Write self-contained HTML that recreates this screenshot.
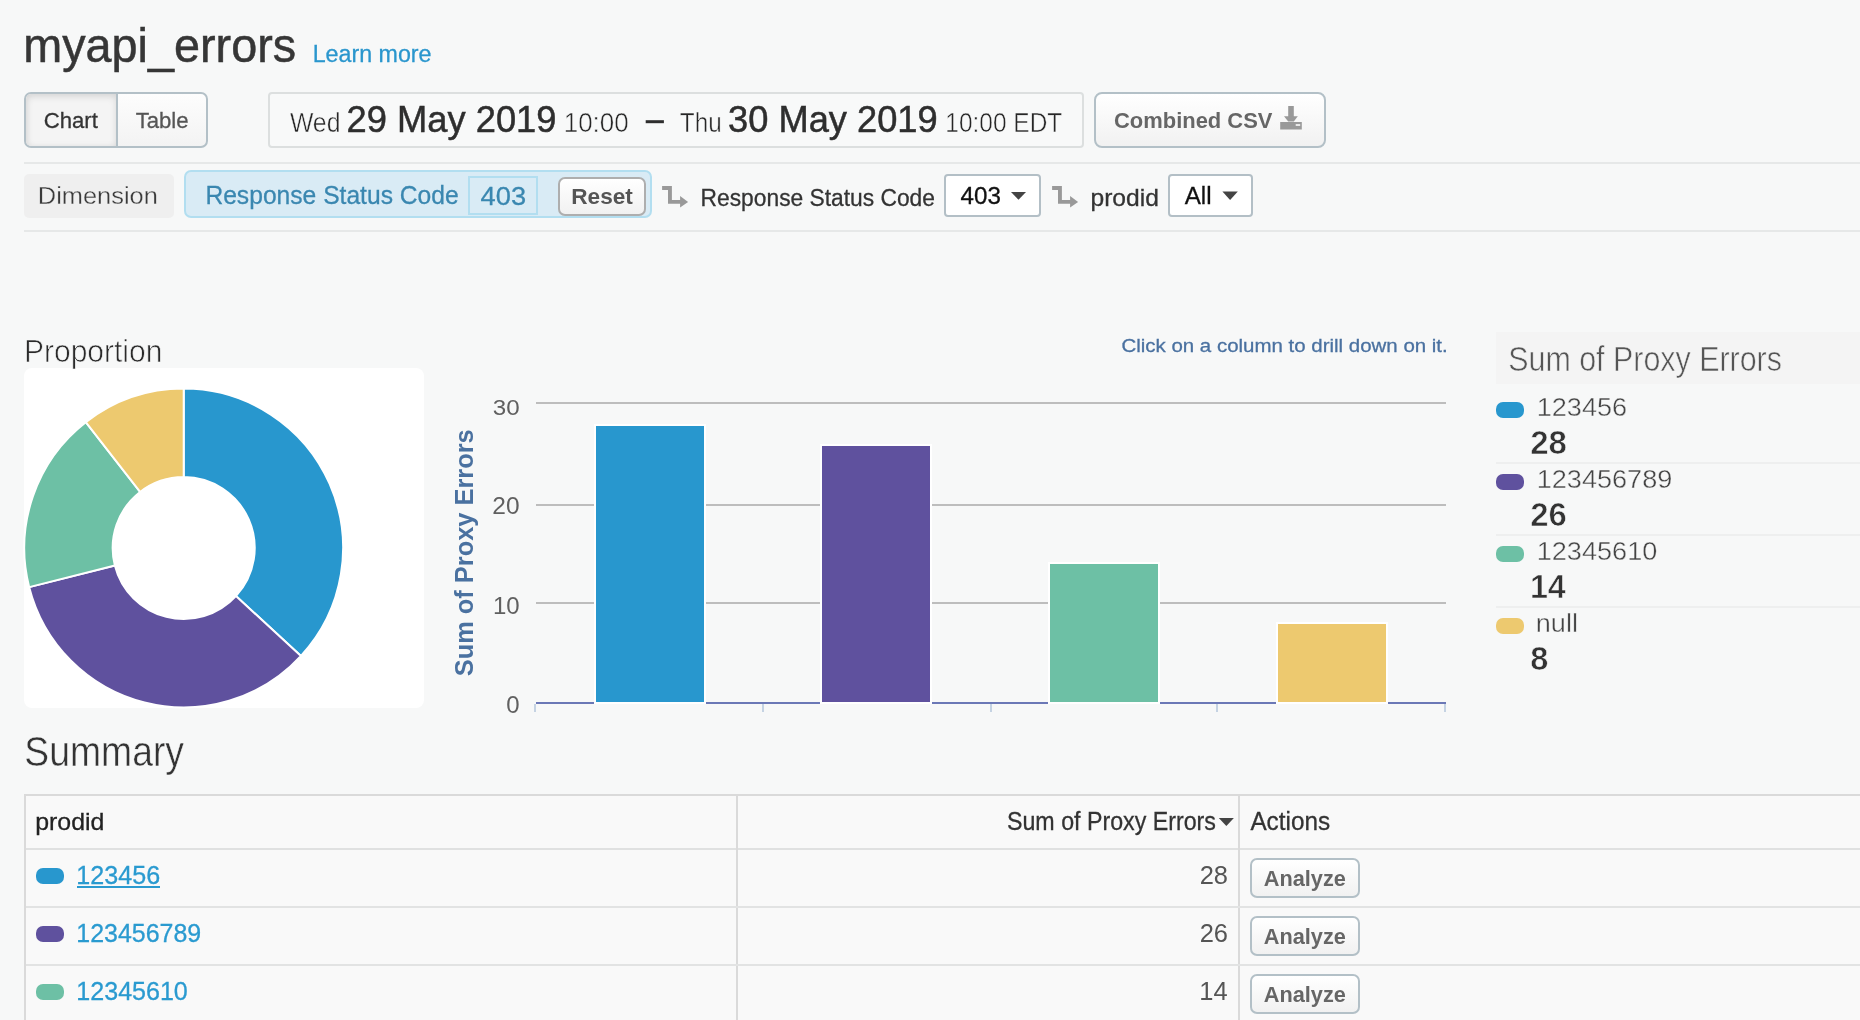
<!DOCTYPE html>
<html><head><meta charset="utf-8"><title>myapi_errors</title>
<style>
html,body{margin:0;padding:0;}
body{width:1860px;height:1020px;overflow:hidden;background:#f7f8f8;position:relative;font-family:"Liberation Sans",sans-serif;}
.a{position:absolute;box-sizing:border-box;}
.hl{position:absolute;height:2px;}
.sw{position:absolute;width:28px;height:16px;border-radius:7px;}
.btn{position:absolute;box-sizing:border-box;border:2px solid #b3c0c7;border-radius:7px;background:linear-gradient(#ffffff,#f1f1f1);}
.an{width:110px;height:40px;}
svg{position:absolute;left:0;top:0;will-change:transform;}
svg text{font-family:"Liberation Sans",sans-serif;}
</style></head><body>
<!-- view toggle -->
<div class="a" style="left:24px;top:92px;width:184px;height:56px;border:2px solid #b3c0c7;border-radius:7px;background:linear-gradient(#fdfdfd,#f3f3f3);overflow:hidden">
  <div class="a" style="left:0;top:0;width:92px;height:52px;background:#f4f4f4;box-shadow:inset 0 3px 7px rgba(0,0,0,.10), inset 2px 0 6px rgba(0,0,0,.05);border-right:2px solid #b3c0c7"></div>
</div>
<!-- date range -->
<div class="a" style="left:268px;top:92px;width:816px;height:56px;border:2px solid #dcdfdf;border-radius:4px;background:#f8f9f9"></div>
<!-- csv -->
<div class="btn" style="left:1094px;top:92px;width:232px;height:56px;border-radius:8px"></div>
<!-- rules -->
<div class="hl" style="left:24px;top:162px;width:1836px;background:#e6e8e8"></div>
<div class="hl" style="left:24px;top:230px;width:1836px;background:#e6e8e8"></div>
<!-- dimension -->
<div class="a" style="left:24px;top:174px;width:150px;height:44px;border-radius:5px;background:#efefef"></div>
<div class="a" style="left:184px;top:170px;width:468px;height:48px;border:2px solid #b2def0;border-radius:7px;background:#d9ebf5"></div>
<div class="a" style="left:468px;top:176px;width:70px;height:39px;border:2px solid #b2def0;background:#d9ebf5"></div>
<div class="btn" style="left:558px;top:177px;width:88px;height:39px;border-color:#aeaeae;border-radius:7px"></div>
<div class="a" style="left:944px;top:174px;width:97px;height:43px;border:2px solid #b3bfc6;border-radius:4px;background:#fff"></div>
<div class="a" style="left:1168px;top:174px;width:85px;height:43px;border:2px solid #b3bfc6;border-radius:4px;background:#fff"></div>
<!-- pie box -->
<div class="a" style="left:24px;top:368px;width:400px;height:340px;border-radius:8px;background:#fff"></div>
<!-- legend -->
<div class="a" style="left:1496px;top:332px;width:364px;height:52px;background:#f4f4f4"></div>
<div class="sw" style="left:1496px;top:402px;background:#2897ce"></div>
<div class="hl" style="left:1496px;top:462px;width:364px;background:#eeefef"></div>
<div class="sw" style="left:1496px;top:474px;background:#5f519e"></div>
<div class="hl" style="left:1496px;top:534px;width:364px;background:#eeefef"></div>
<div class="sw" style="left:1496px;top:546px;background:#6dc0a5"></div>
<div class="hl" style="left:1496px;top:606px;width:364px;background:#eeefef"></div>
<div class="sw" style="left:1496px;top:618px;background:#edc96f"></div>

<!-- table -->
<div class="a" style="left:24px;top:794px;width:1840px;height:240px;border:2px solid #dadada;border-right:none;border-bottom:none;background:#f9f9f9"></div>
<div class="hl" style="left:26px;top:848px;width:1834px;background:#e0e1e1"></div>
<div class="a" style="left:736px;top:796px;width:2px;height:230px;background:#dadada"></div>
<div class="a" style="left:1238px;top:796px;width:2px;height:230px;background:#dadada"></div>
<div class="sw" style="left:36px;top:868px;width:28px;height:16px;background:#2897ce"></div>
<div class="btn an" style="left:1250px;top:858px"></div>
<div class="hl" style="left:26px;top:906px;width:1834px;background:#e2e3e3"></div>
<div class="sw" style="left:36px;top:926px;width:28px;height:16px;background:#5f519e"></div>
<div class="btn an" style="left:1250px;top:916px"></div>
<div class="hl" style="left:26px;top:964px;width:1834px;background:#e2e3e3"></div>
<div class="sw" style="left:36px;top:984px;width:28px;height:16px;background:#6dc0a5"></div>
<div class="btn an" style="left:1250px;top:974px"></div>
<div class="hl" style="left:26px;top:1022px;width:1834px;background:#e2e3e3"></div>
<div class="hl" style="left:76.5px;top:885.6px;width:83px;height:2px;background:#2a9ad0"></div>

<svg width="1860" height="1020" viewBox="0 0 1860 1020">
<path d="M183.70,388.60 A159.4,159.4 0 0 1 300.97,655.96 L235.94,596.09 A71.0,71.0 0 0 0 183.70,477.00 Z" fill="#2897ce" stroke="#fff" stroke-width="2" stroke-linejoin="round"/>
<path d="M300.97,655.96 A159.4,159.4 0 0 1 29.18,587.13 L114.87,565.43 A71.0,71.0 0 0 0 235.94,596.09 Z" fill="#5f519e" stroke="#fff" stroke-width="2" stroke-linejoin="round"/>
<path d="M29.18,587.13 A159.4,159.4 0 0 1 85.79,422.21 L140.09,491.97 A71.0,71.0 0 0 0 114.87,565.43 Z" fill="#6dc0a5" stroke="#fff" stroke-width="2" stroke-linejoin="round"/>
<path d="M85.79,422.21 A159.4,159.4 0 0 1 183.70,388.60 L183.70,477.00 A71.0,71.0 0 0 0 140.09,491.97 Z" fill="#edc96f" stroke="#fff" stroke-width="2" stroke-linejoin="round"/>
<rect x="536" y="402" width="910" height="2" fill="#bdbdbd"/>
<rect x="536" y="504" width="910" height="2" fill="#bdbdbd"/>
<rect x="536" y="602" width="910" height="2" fill="#bdbdbd"/>
<rect x="536" y="702" width="910" height="2" fill="#6b78b6"/>
<rect x="534" y="704" width="2" height="8" fill="#c5d3e3"/>
<rect x="762" y="704" width="2" height="8" fill="#c5d3e3"/>
<rect x="990" y="704" width="2" height="8" fill="#c5d3e3"/>
<rect x="1216" y="704" width="2" height="8" fill="#c5d3e3"/>
<rect x="1444" y="704" width="2" height="8" fill="#c5d3e3"/>
<rect x="594" y="424" width="112" height="280" fill="#fff"/>
<rect x="596" y="426" width="108" height="276" fill="#2897ce"/>
<rect x="820" y="444" width="112" height="260" fill="#fff"/>
<rect x="822" y="446" width="108" height="256" fill="#5f519e"/>
<rect x="1048" y="562" width="112" height="142" fill="#fff"/>
<rect x="1050" y="564" width="108" height="138" fill="#6dc0a5"/>
<rect x="1276" y="622" width="112" height="82" fill="#fff"/>
<rect x="1278" y="624" width="108" height="78" fill="#edc96f"/>
<rect x="645.7" y="120.2" width="18.2" height="3" fill="#2e2e2e"/>
<polygon points="1052.10,186.00 1061.90,186.00 1061.90,200.10 1070.10,200.10 1070.10,196.00 1078.10,202.00 1070.10,207.60 1070.10,203.70 1058.00,203.70 1058.00,189.90 1052.10,189.90" fill="#999"/>
<polygon points="662.10,186.00 671.90,186.00 671.90,200.10 680.10,200.10 680.10,196.00 688.10,202.00 680.10,207.60 680.10,203.70 668.00,203.70 668.00,189.90 662.10,189.90" fill="#999"/>
<g fill="#999"><rect x="1288.2" y="106" width="5.6" height="12"/><polygon points="1284,116.3 1297.8,116.3 1293.8,121.6 1288.2,121.6"/><rect x="1280.2" y="122" width="21.6" height="7.5"/><rect x="1295.7" y="124" width="4.5" height="2" fill="#e8e8e8"/></g>
<polygon points="1011,191.9 1026,191.9 1018.5,199.8" fill="#444"/>
<polygon points="1222.4,191.6 1237.8,191.6 1230.1,199.9" fill="#444"/>
<polygon points="1218.8,818 1233.9,818 1226.35,825.9" fill="#444"/>
<text x="23.18" y="62" font-size="47.81" textLength="272.99" lengthAdjust="spacingAndGlyphs" fill="#363636" stroke="#363636" stroke-width="0.5">myapi_errors</text>
<text x="312.68" y="61.9" font-size="24.75" textLength="118.86" lengthAdjust="spacingAndGlyphs" fill="#2a96cd" stroke="#2a96cd" stroke-width="0.3">Learn more</text>
<text x="43.66" y="127.9" font-size="22.47" textLength="54.16" lengthAdjust="spacingAndGlyphs" fill="#333" stroke="#333" stroke-width="0.3">Chart</text>
<text x="135.65" y="128" font-size="22.76" textLength="52.94" lengthAdjust="spacingAndGlyphs" fill="#555" stroke="#555" stroke-width="0.3">Table</text>
<text x="289.9" y="132.1" font-size="27.02" textLength="50.59" lengthAdjust="spacingAndGlyphs" fill="#262626" stroke="#f7f8f8" stroke-width="0.5">Wed</text>
<text x="346.6" y="132.1" font-size="37.48" textLength="209.87" lengthAdjust="spacingAndGlyphs" fill="#2e2e2e" stroke="#2e2e2e" stroke-width="0.5">29 May 2019</text>
<text x="563.78" y="132.1" font-size="27.02" textLength="64.87" lengthAdjust="spacingAndGlyphs" fill="#262626" stroke="#f7f8f8" stroke-width="0.5">10:00</text>
<text x="679.82" y="132.1" font-size="27.02" textLength="41.84" lengthAdjust="spacingAndGlyphs" fill="#262626" stroke="#f7f8f8" stroke-width="0.5">Thu</text>
<text x="728.07" y="132.1" font-size="37.48" textLength="209.6" lengthAdjust="spacingAndGlyphs" fill="#2e2e2e" stroke="#2e2e2e" stroke-width="0.5">30 May 2019</text>
<text x="945.37" y="132" font-size="26.88" textLength="116.95" lengthAdjust="spacingAndGlyphs" fill="#262626" stroke="#f7f8f8" stroke-width="0.5">10:00 EDT</text>
<text x="1114.01" y="127.6" font-size="22.76" textLength="158.48" lengthAdjust="spacingAndGlyphs" fill="#666" font-weight="bold">Combined CSV</text>
<text x="37.82" y="204" font-size="24.6" textLength="120.01" lengthAdjust="spacingAndGlyphs" fill="#3a3a3a" stroke="#efefef" stroke-width="0.3">Dimension</text>
<text x="205.38" y="203.8" font-size="26.03" textLength="253.32" lengthAdjust="spacingAndGlyphs" fill="#3a87b0" stroke="#3a87b0" stroke-width="0.3">Response Status Code</text>
<text x="480.57" y="205.4" font-size="26.31" textLength="45.53" lengthAdjust="spacingAndGlyphs" fill="#3a87b0" stroke="#3a87b0" stroke-width="0.3">403</text>
<text x="571.29" y="203.8" font-size="21.33" textLength="61.62" lengthAdjust="spacingAndGlyphs" fill="#555" font-weight="bold">Reset</text>
<text x="700.62" y="205.5" font-size="23.89" textLength="234.3" lengthAdjust="spacingAndGlyphs" fill="#333" stroke="#333" stroke-width="0.3">Response Status Code</text>
<text x="960.62" y="203.7" font-size="24.46" textLength="40.36" lengthAdjust="spacingAndGlyphs" fill="#111" stroke="#111" stroke-width="0.3">403</text>
<text x="1090.46" y="205.6" font-size="24.1" textLength="68.42" lengthAdjust="spacingAndGlyphs" fill="#333" stroke="#333" stroke-width="0.3">prodid</text>
<text x="1184.7" y="204" font-size="24.18" textLength="26.9" lengthAdjust="spacingAndGlyphs" fill="#111" stroke="#111" stroke-width="0.3">All</text>
<text x="23.96" y="362.1" font-size="30.58" textLength="138.43" lengthAdjust="spacingAndGlyphs" fill="#2a2a2a" stroke="#f7f8f8" stroke-width="0.7">Proportion</text>
<text x="1121.44" y="351.9" font-size="18.92" textLength="326.31" lengthAdjust="spacingAndGlyphs" fill="#4a71a0" stroke="#4a71a0" stroke-width="0.3">Click on a column to drill down on it.</text>
<text x="492.75" y="414.8" font-size="22.9" textLength="26.86" lengthAdjust="spacingAndGlyphs" fill="#606060">30</text>
<text x="492.35" y="513.8" font-size="23.04" textLength="27.26" lengthAdjust="spacingAndGlyphs" fill="#606060">20</text>
<text x="492.9" y="613.7" font-size="23.04" textLength="26.7" lengthAdjust="spacingAndGlyphs" fill="#606060">10</text>
<text x="506.25" y="712.9" font-size="23.32" textLength="13.35" lengthAdjust="spacingAndGlyphs" fill="#606060">0</text>
<text x="1508.25" y="370.8" font-size="34.28" textLength="273.7" lengthAdjust="spacingAndGlyphs" fill="#555" stroke="#f4f4f4" stroke-width="0.6">Sum of Proxy Errors</text>
<text x="1536.71" y="416" font-size="26.6" textLength="90.39" lengthAdjust="spacingAndGlyphs" fill="#444" stroke="#f7f8f8" stroke-width="0.4">123456</text>
<text x="1530.17" y="454" font-size="32.85" textLength="36.76" lengthAdjust="spacingAndGlyphs" fill="#333" font-weight="bold" stroke="#f7f8f8" stroke-width="0.6">28</text>
<text x="1536.71" y="488" font-size="26.6" textLength="135.59" lengthAdjust="spacingAndGlyphs" fill="#444" stroke="#f7f8f8" stroke-width="0.4">123456789</text>
<text x="1530.17" y="526" font-size="32.85" textLength="36.65" lengthAdjust="spacingAndGlyphs" fill="#333" font-weight="bold" stroke="#f7f8f8" stroke-width="0.6">26</text>
<text x="1536.71" y="560" font-size="26.6" textLength="120.57" lengthAdjust="spacingAndGlyphs" fill="#444" stroke="#f7f8f8" stroke-width="0.4">12345610</text>
<text x="1529.88" y="598" font-size="32.85" textLength="35.91" lengthAdjust="spacingAndGlyphs" fill="#333" font-weight="bold" stroke="#f7f8f8" stroke-width="0.6">14</text>
<text x="1535.81" y="632" font-size="25.46" textLength="42.18" lengthAdjust="spacingAndGlyphs" fill="#444" stroke="#f7f8f8" stroke-width="0.4">null</text>
<text x="1530.18" y="670" font-size="32.85" textLength="18.13" lengthAdjust="spacingAndGlyphs" fill="#333" font-weight="bold" stroke="#f7f8f8" stroke-width="0.6">8</text>
<text x="24.33" y="766.1" font-size="41.67" textLength="159.67" lengthAdjust="spacingAndGlyphs" fill="#333" stroke="#f7f8f8" stroke-width="0.5">Summary</text>
<text x="35.25" y="830" font-size="24.78" textLength="69.15" lengthAdjust="spacingAndGlyphs" fill="#222" stroke="#222" stroke-width="0.3">prodid</text>
<text x="1006.97" y="830.3" font-size="25.6" textLength="208.95" lengthAdjust="spacingAndGlyphs" fill="#333" stroke="#333" stroke-width="0.3">Sum of Proxy Errors</text>
<text x="1250.4" y="830" font-size="25.03" textLength="79.76" lengthAdjust="spacingAndGlyphs" fill="#333" stroke="#333" stroke-width="0.3">Actions</text>
<text x="76.33" y="883.8" font-size="25.03" textLength="83.79" lengthAdjust="spacingAndGlyphs" fill="#2a9ad0" stroke="#2a9ad0" stroke-width="0.3">123456</text>
<text x="1199.71" y="883.9" font-size="25.17" textLength="28.33" lengthAdjust="spacingAndGlyphs" fill="#555">28</text>
<text x="1263.76" y="885.9" font-size="22.61" textLength="82.08" lengthAdjust="spacingAndGlyphs" fill="#666" font-weight="bold">Analyze</text>
<text x="76.34" y="941.8" font-size="25.03" textLength="124.87" lengthAdjust="spacingAndGlyphs" fill="#2a9ad0" stroke="#2a9ad0" stroke-width="0.3">123456789</text>
<text x="1199.71" y="941.9" font-size="25.17" textLength="28.33" lengthAdjust="spacingAndGlyphs" fill="#555">26</text>
<text x="1263.76" y="943.9" font-size="22.61" textLength="82.08" lengthAdjust="spacingAndGlyphs" fill="#666" font-weight="bold">Analyze</text>
<text x="76.33" y="999.8" font-size="25.03" textLength="111.49" lengthAdjust="spacingAndGlyphs" fill="#2a9ad0" stroke="#2a9ad0" stroke-width="0.3">12345610</text>
<text x="1199.31" y="999.9" font-size="25.17" textLength="28.33" lengthAdjust="spacingAndGlyphs" fill="#555">14</text>
<text x="1263.76" y="1001.9" font-size="22.61" textLength="82.08" lengthAdjust="spacingAndGlyphs" fill="#666" font-weight="bold">Analyze</text>
<text transform="translate(472.5,676.3) rotate(-90)" x="0" y="0" font-size="25.46" textLength="247.03" lengthAdjust="spacingAndGlyphs" fill="#4a71a0" font-weight="bold">Sum of Proxy Errors</text>
</svg>
</body></html>
